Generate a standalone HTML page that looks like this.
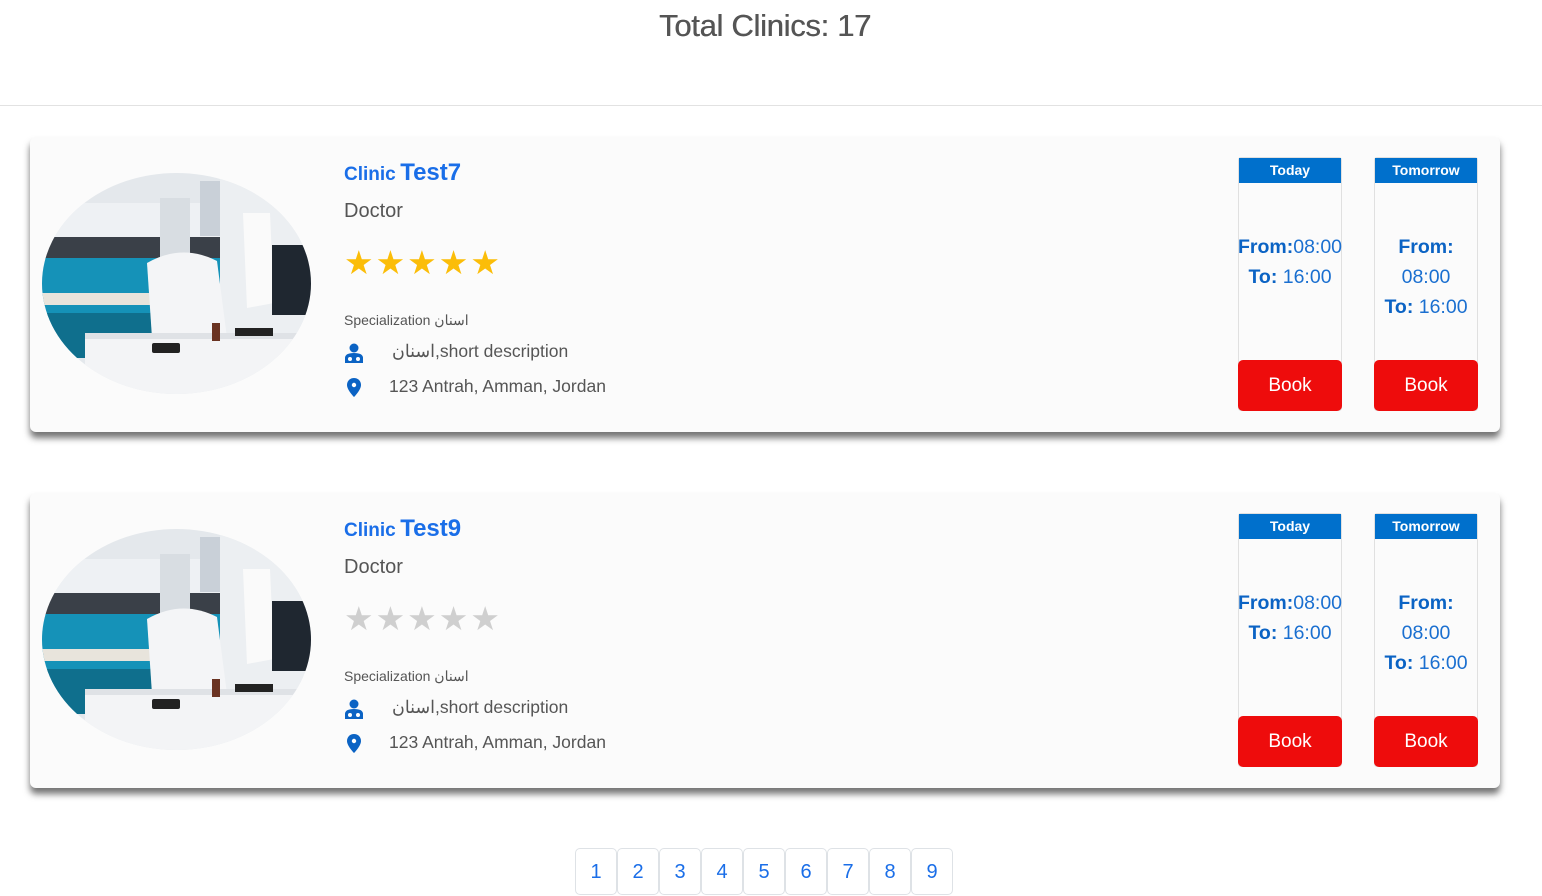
<!DOCTYPE html>
<html><head><meta charset="utf-8"><style>
*{margin:0;padding:0;box-sizing:border-box}
body{width:1542px;height:896px;background:#fff;font-family:"Liberation Sans",Roboto,sans-serif;position:relative;overflow:hidden;color:#555}
h1{position:absolute;top:8px;left:0;width:1530px;text-align:center;font-size:31px;font-weight:normal;color:#555;font-family:"Liberation Sans",sans-serif;letter-spacing:-0.3px;text-shadow:0.4px 0 0 #555}
.hr{position:absolute;top:105px;left:0;width:1542px;height:1px;background:#e2e2e2}
.card{position:absolute;left:30px;width:1470px;height:295px;background:#fbfbfb;border-radius:6px;box-shadow:0 6px 7px rgba(0,0,0,.55)}
.img{position:absolute;left:12px;top:36px;width:269px;height:221px}
.title{position:absolute;left:314px;top:22px;color:#1a6ee8;font-weight:bold;white-space:nowrap}
.title .s{font-size:19px}.title .b{font-size:24px}
.doc{position:absolute;left:314px;top:63px;font-size:20px;color:#555}
.stars{position:absolute;left:314px;top:108px;font-size:33px;letter-spacing:2px;line-height:36px}
.spec{position:absolute;left:314px;top:175px;font-size:14px;color:#555;font-family:"Liberation Sans","Noto Sans CJK SC",sans-serif}
.l1{position:absolute;left:362px;top:204px;font-size:17.5px;color:#555;font-family:"Liberation Sans","Noto Sans CJK SC",sans-serif}
.l2{position:absolute;left:359px;top:239px;font-size:17.5px;color:#555}
.ic1{position:absolute;left:315px;top:206px}
.ic2{position:absolute;left:317px;top:241px}
.box{position:absolute;top:20px;width:104px;height:254px;border:1px solid #e0e0e0;border-radius:3px;background:#fbfbfb}
.hd{height:25px;background:#0070cc;color:#fff;font-weight:bold;font-size:14px;text-align:center;line-height:25px}
.tm{position:absolute;left:-6px;right:-6px;text-align:center;font-size:19.5px;line-height:30px;color:#1a6fd0}
.tm b{color:#0b63c4}
.bk{position:absolute;left:-1px;right:-1px;bottom:-1px;height:51px;background:#ee0c0c;border-radius:5px;color:#fff;font-size:19px;text-align:center;line-height:51px}
.pg{position:absolute;top:848px;left:575px;display:flex}
.pg div{width:42px;height:47px;border:1px solid #dee2e6;border-radius:5px;color:#1a6ee8;font-size:20px;text-align:center;line-height:47px;background:#fff}
</style></head><body>
<h1>Total Clinics: 17</h1>
<div class="hr"></div>

<svg width="0" height="0" style="position:absolute"><defs>
<clipPath id="ec"><ellipse cx="134.5" cy="110.5" rx="134.5" ry="110.5"/></clipPath>
<g id="photo">
<rect width="269" height="221" fill="#e4e8ec"/>
<rect x="0" y="30" width="180" height="35" fill="#eef1f4"/>
<rect x="0" y="64" width="180" height="22" fill="#3a4048"/>
<rect x="0" y="85" width="180" height="100" fill="#1592b8"/>
<rect x="0" y="140" width="180" height="45" fill="#0f6f8d"/>
<rect x="158" y="8" width="20" height="55" fill="#c9d0d8"/>
<rect x="118" y="25" width="30" height="60" fill="#d8dde2"/>
<rect x="0" y="120" width="108" height="12" fill="#e8e4dc"/>
<rect x="178" y="0" width="91" height="221" fill="#eceff2"/>
<path d="M201 40 L228 40 L232 130 L205 135 Z" fill="#fafafa"/>
<path d="M105 90 Q140 70 175 88 L185 165 L110 165 Z" fill="#f4f5f7"/>
<rect x="230" y="72" width="39" height="70" fill="#1f2730"/>
<rect x="43" y="160" width="226" height="61" fill="#f3f4f6"/>
<rect x="43" y="160" width="226" height="6" fill="#dfe2e6"/>
<rect x="110" y="170" width="28" height="10" fill="#222" rx="2"/>
<rect x="170" y="150" width="8" height="18" fill="#6a3322"/>
<rect x="193" y="155" width="38" height="8" fill="#222"/>
</g></defs></svg>

<div class="card" style="top:137px">
 <svg class="img" viewBox="0 0 269 221"><g clip-path="url(#ec)"><use href="#photo"/></g></svg>
 <div class="title"><span class="s">Clinic</span> <span class="b">Test7</span></div>
 <div class="doc">Doctor</div>
 <div class="stars" style="color:#fbbd08">★★★★★</div>
 <div class="spec">Specialization اسنان</div>
 <svg class="ic1" width="18" height="20" viewBox="0 0 18 20"><circle cx="9" cy="5" r="4.5" fill="#0b63c4"/><path d="M0 20 V15 Q0 10 9 10 Q18 10 18 15 V20 Z" fill="#0b63c4"/><circle cx="5" cy="16" r="2" fill="#fff"/><circle cx="13" cy="16" r="2" fill="#fff"/></svg>
 <div class="l1">اسنان,short description</div>
 <svg class="ic2" width="14" height="19" viewBox="0 0 14 19"><path d="M7 0 C3 0 0 3 0 7 C0 12 7 19 7 19 C7 19 14 12 14 7 C14 3 11 0 7 0Z" fill="#0b63c4"/><circle cx="7" cy="7" r="2.2" fill="#fff"/></svg>
 <div class="l2">123 Antrah, Amman, Jordan</div>
 <div class="box" style="left:1208px"><div class="hd">Today</div><div class="tm" style="top:74px"><b>From:</b>08:00<br><b>To:</b> 16:00</div><div class="bk">Book</div></div>
 <div class="box" style="left:1344px"><div class="hd">Tomorrow</div><div class="tm" style="top:74px"><b>From:</b><br>08:00<br><b>To:</b> 16:00</div><div class="bk">Book</div></div>
</div>

<div class="card" style="top:493px">
 <svg class="img" viewBox="0 0 269 221"><g clip-path="url(#ec)"><use href="#photo"/></g></svg>
 <div class="title"><span class="s">Clinic</span> <span class="b">Test9</span></div>
 <div class="doc">Doctor</div>
 <div class="stars" style="color:#cfcfcf">★★★★★</div>
 <div class="spec">Specialization اسنان</div>
 <svg class="ic1" width="18" height="20" viewBox="0 0 18 20"><circle cx="9" cy="5" r="4.5" fill="#0b63c4"/><path d="M0 20 V15 Q0 10 9 10 Q18 10 18 15 V20 Z" fill="#0b63c4"/><circle cx="5" cy="16" r="2" fill="#fff"/><circle cx="13" cy="16" r="2" fill="#fff"/></svg>
 <div class="l1">اسنان,short description</div>
 <svg class="ic2" width="14" height="19" viewBox="0 0 14 19"><path d="M7 0 C3 0 0 3 0 7 C0 12 7 19 7 19 C7 19 14 12 14 7 C14 3 11 0 7 0Z" fill="#0b63c4"/><circle cx="7" cy="7" r="2.2" fill="#fff"/></svg>
 <div class="l2">123 Antrah, Amman, Jordan</div>
 <div class="box" style="left:1208px"><div class="hd">Today</div><div class="tm" style="top:74px"><b>From:</b>08:00<br><b>To:</b> 16:00</div><div class="bk">Book</div></div>
 <div class="box" style="left:1344px"><div class="hd">Tomorrow</div><div class="tm" style="top:74px"><b>From:</b><br>08:00<br><b>To:</b> 16:00</div><div class="bk">Book</div></div>
</div>

<div class="pg"><div>1</div><div>2</div><div>3</div><div>4</div><div>5</div><div>6</div><div>7</div><div>8</div><div>9</div></div>
</body></html>
